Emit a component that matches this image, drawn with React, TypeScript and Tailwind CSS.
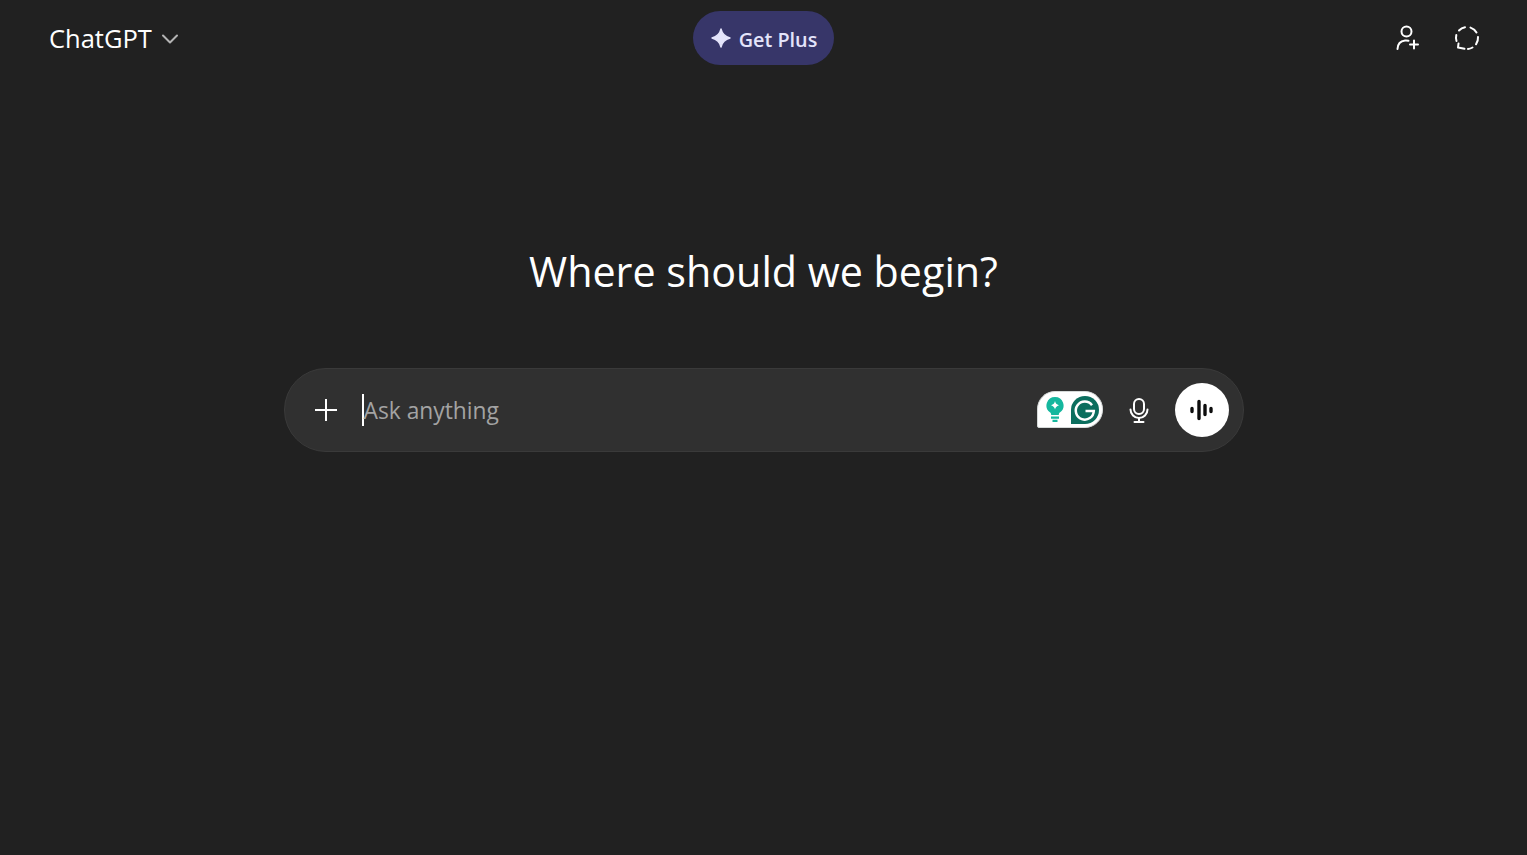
const sans = "font-['Open_Sans','Noto_Sans',sans-serif]";

function Spark() {
  return (
    <svg width="20" height="20" viewBox="0 0 20 20" fill="#e4e4fb">
      <path d="M10 1c1.100 4.800 3.400 7.700 9 9-5.600 1.300-7.900 4.200-9 9-1.100-4.800-3.400-7.700-9-9 5.600-1.300 7.900-4.200 9-9z" stroke="#e4e4fb" strokeWidth="1.400" strokeLinejoin="round" />
    </svg>
  );
}

function AddPerson() {
  return (
    <svg width="26" height="26" viewBox="0 0 26 26" fill="none" stroke="#fff" strokeWidth="2" strokeLinecap="round">
      <circle cx="11.500" cy="6.500" r="5" />
      <path d="M2.500 24c.2-4.500 2.600-8 7.500-8.500 1.500-.1 2.600 0 3.500.2" />
      <path d="M19 15.500v8M15 19.500h8" />
    </svg>
  );
}

function TemporaryChat() {
  return (
    <svg width="26" height="26" viewBox="0 0 26 26" fill="none" stroke="#fff" strokeWidth="2" strokeLinecap="round" strokeLinejoin="round">
      <path d="M5 5.500A11 11 0 0 1 11 2.200" />
      <path d="M16.500 2.600A11 11 0 0 1 22.500 7.500" />
      <path d="M24 12A11 11 0 0 1 22 19.300" />
      <path d="M18.500 22.500A11 11 0 0 1 14 24" />
      <path d="M10.500 23.800L4 22.500L4.500 18.500" />
      <path d="M2.500 16A11 11 0 0 1 2.300 10" />
    </svg>
  );
}

function MicIcon() {
  return (
    <svg width="26" height="26" viewBox="0 0 26 26" fill="none" stroke="#fff" strokeWidth="2" strokeLinecap="round">
      <rect x="8" y="2" width="10" height="15" rx="5" />
      <path d="M4.500 12.500a8.500 8.500 0 0 0 17 0" />
      <path d="M13 21v4M8.500 25h9" />
    </svg>
  );
}

function GrammarlyBadge() {
  return (
    <div className="mb-[1px] flex h-[37px] w-[66px] items-center gap-[7px] rounded-[18px] rounded-bl-[2px] border border-[#d5d9d8] bg-white pl-[8px]">
      <svg width="18" height="27" viewBox="0 0 18 27">
        <path d="M9 1a8.500 8.500 0 0 0-5.100 15.300c1 .8 1.300 1.500 1.300 2.700h7.600c0-1.200.3-1.900 1.300-2.700A8.500 8.500 0 0 0 9 1z" fill="#15b79e" />
        <path d="M9 5c.5 2.300 1.500 3.300 4 4.300-2.500 1-3.500 2-4 4.300-.5-2.300-1.500-3.300-4-4.300 2.500-1 3.500-2 4-4.300z" fill="#fff" />
        <path d="M5 20.500h8v2.200H5zM6.500 23.700h5v2.200h-5z" fill="#15b79e" />
      </svg>
      <svg width="28" height="28" viewBox="0 0 28 28">
        <path d="M14 0a14 14 0 0 1 0 28H0V14A14 14 0 0 1 14 0z" fill="#0b6e5e" />
        <path d="M21 9.200A9 9 0 1 0 22.800 15H14.500" fill="none" stroke="#fff" strokeWidth="2.500" />
      </svg>
    </div>
  );
}

function VoiceButton() {
  return (
    <button className="flex size-[54px] items-center justify-center rounded-full bg-white">
      <svg width="26" height="24" viewBox="0 0 26 24" fill="none" stroke="#0d0d0d" strokeWidth="3.400" strokeLinecap="round">
        <path d="M3 10.500v3M10 3.500v17M16 7.500v9M22 10.500v3" />
      </svg>
    </button>
  );
}

export default function App() {
  return (
    <div className={`flex min-h-[855px] flex-col bg-[#212121] text-white ${sans}`}>
      <header className="flex h-[77px] items-center justify-between pl-[49px] pr-[47px]">
        <div className="flex w-[200px] items-center gap-[9px]">
          <span className="mt-[1px] text-[25.500px] leading-none">ChatGPT</span>
          <svg width="18" height="12" viewBox="0 0 18 12" fill="none" stroke="#b4b4b4" strokeWidth="2" strokeLinecap="round" strokeLinejoin="round">
            <path d="M2 2.500l7 7 7-7" />
          </svg>
        </div>
        <button className="mb-[1px] ml-[-1px] mr-[1px] flex h-[54px] w-[141px] items-center justify-center gap-[8px] rounded-full bg-[#373669] pl-[1px] text-[19.800px] font-semibold text-[#e4e4fb]">
          <Spark />
          <span className="mt-[3px]">Get Plus</span>
        </button>
        <div className="mb-[2px] flex w-[200px] items-center justify-end gap-[33px]">
          <AddPerson />
          <TemporaryChat />
        </div>
      </header>

      <main className="flex flex-col items-center">
        <h1 className="mt-[165px] text-[41.250px] font-normal leading-[58px]">Where should we begin?</h1>
        <div className="mt-[68px] flex h-[84px] w-[960px] items-center rounded-[42px] border border-[#3a3a3a] bg-[#303030] pl-[29px] pr-[14px]">
          <svg width="24" height="24" viewBox="0 0 24 24" fill="none" stroke="#fff" strokeWidth="2">
            <path d="M12 1v22M1 12h22" />
          </svg>
          <div className="ml-[24px] h-[32px] w-[2px] bg-white" />
          <span className="mt-[2px] flex-1 text-[22.800px] text-[#a3a3a3]">Ask anything</span>
          <GrammarlyBadge />
          <div className="ml-[23px]">
            <MicIcon />
          </div>
          <div className="ml-[23px]">
            <VoiceButton />
          </div>
        </div>
      </main>
    </div>
  );
}
